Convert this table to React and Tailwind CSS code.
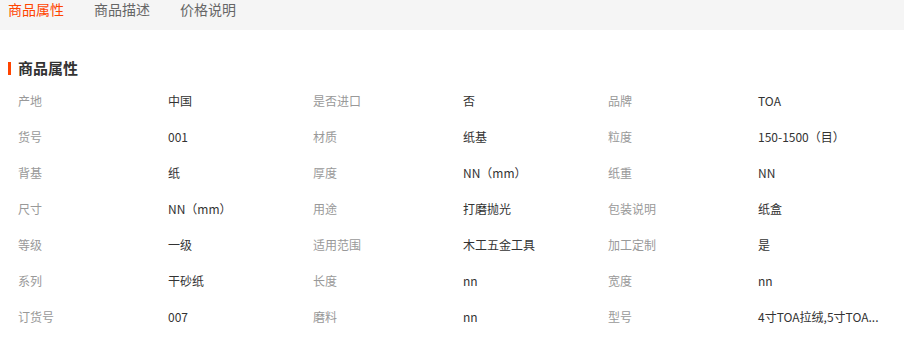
import React from 'react';

const tabs = ['商品属性', '商品描述', '价格说明'];

const rows = [
  ['产地', '中国', '是否进口', '否', '品牌', 'TOA'],
  ['货号', '001', '材质', '纸基', '粒度', '150-1500（目）'],
  ['背基', '纸', '厚度', 'NN（mm）', '纸重', 'NN'],
  ['尺寸', 'NN（mm）', '用途', '打磨抛光', '包装说明', '纸盒'],
  ['等级', '一级', '适用范围', '木工五金工具', '加工定制', '是'],
  ['系列', '干砂纸', '长度', 'nn', '宽度', 'nn'],
  ['订货号', '007', '磨料', 'nn', '型号', '4寸TOA拉绒,5寸TOA...'],
];

const App = () => {
  return (
    <div
      className="w-[904px] h-[349px] bg-white overflow-hidden text-[12px]"
      style={{ fontFamily: '"Noto Sans CJK SC", "Noto Sans", sans-serif' }}
    >
      {/* 标签栏 */}
      <div className="h-[30px] bg-[#f5f5f5] flex items-start pl-[8px] gap-[30px]">
        {tabs.map((t, i) => (
          <div
            key={t}
            className={`text-[14px] leading-[18px] ${i === 0 ? 'text-[#ff4400]' : 'text-[#666]'}`}
          >
            {t}
          </div>
        ))}
      </div>

      {/* 标题 */}
      <div className="flex items-center pl-[8px] mt-[29px] h-[18px]">
        <div className="w-[3px] h-[13px] bg-[#ff4400]" />
        <div className="ml-[7px] text-[15px] font-bold text-[#333] leading-[18px]">商品属性</div>
      </div>

      {/* 属性表 */}
      <div className="mt-[6px] pl-[18px]">
        {rows.map((r, i) => (
          <div key={i} className="flex h-[36px] items-center">
            {[0, 2, 4].map((j) => (
              <React.Fragment key={j}>
                <div className="w-[150px] text-[#999] leading-[18px]">{r[j]}</div>
                <div className="w-[145px] text-[#333] leading-[18px] whitespace-nowrap">{r[j + 1]}</div>
              </React.Fragment>
            ))}
          </div>
        ))}
      </div>
    </div>
  );
};

export default App;
